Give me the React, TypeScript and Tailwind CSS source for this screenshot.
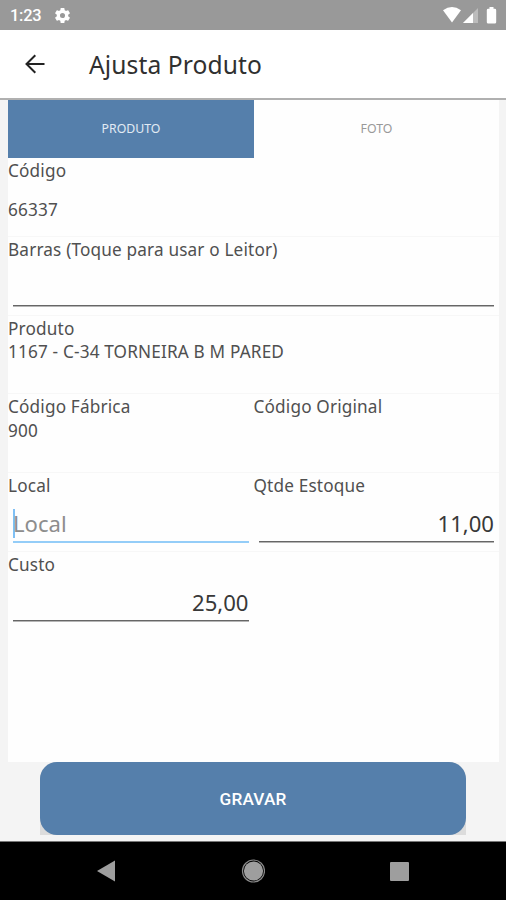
import React from 'react';
import clsx from 'clsx';

type FieldProps = {
  label: string;
  children?: React.ReactNode;
};

const Field = ({ label, children }: FieldProps) => (
  <div className="flex w-1/2 flex-1 flex-col">
    <span className="block h-6 whitespace-nowrap pt-px leading-6">{label}</span>
    {children}
  </div>
);

type InputLineProps = {
  value?: string;
  placeholder?: string;
  focused?: boolean;
};

const InputLine = ({ value, placeholder, focused }: InputLineProps) => (
  <div
    className={clsx(
      'mx-[5px] flex items-center text-[22.1px] tracking-normal text-[#383838]',
      focused
        ? 'h-[46px] border-b-2 border-[#94cdf8] pt-[9px]'
        : 'h-[45px] justify-end border-b border-[#666666] pt-2.5 shadow-[0_1px_0_#b5b5b5]'
    )}
  >
    {focused && <span className="-mr-0.5 h-[29px] w-0.5 bg-[#7fc0f5]" />}
    {placeholder ? <span className="text-[#8d8d8d]">{placeholder}</span> : value}
  </div>
);

const Row = ({ children }: { children: React.ReactNode }) => (
  <div className="flex h-[78.75px] border-b border-[#f7f7f7]">{children}</div>
);

const StatusBar = () => (
  <div className="flex h-[30px] items-center justify-between bg-[#999999] text-white">
    <div className="flex items-center pl-2.5 pt-px">
      <span className="font-['Roboto',sans-serif] text-[16.4px] font-medium leading-5 tracking-[-0.2px]">1:23</span>
      <svg className="ml-3 size-[19px]" viewBox="0 0 24 24" fill="currentColor">
        <path d="M19.14 12.94c.04-.3.06-.61.06-.94 0-.32-.02-.64-.07-.94l2.03-1.58a.49.49 0 0 0 .12-.61l-1.92-3.32a.49.49 0 0 0-.59-.22l-2.39.96c-.5-.38-1.03-.7-1.62-.94l-.36-2.54a.48.48 0 0 0-.48-.41h-3.84a.47.47 0 0 0-.47.41l-.36 2.54c-.59.24-1.13.57-1.62.94l-2.39-.96a.48.48 0 0 0-.59.22L2.74 8.87a.48.48 0 0 0 .12.61l2.03 1.58c-.05.3-.09.63-.09.94s.02.64.07.94l-2.03 1.58a.49.49 0 0 0-.12.61l1.92 3.32c.12.22.37.29.59.22l2.39-.96c.5.38 1.03.7 1.62.94l.36 2.54c.05.24.24.41.48.41h3.84c.24 0 .44-.17.47-.41l.36-2.54c.59-.24 1.13-.56 1.62-.94l2.39.96c.22.08.47 0 .59-.22l1.92-3.32a.48.48 0 0 0-.12-.61zM12 15.2a3.2 3.2 0 1 1 0-6.4 3.2 3.2 0 0 1 0 6.4" />
      </svg>
    </div>
    <svg className="mr-2 h-[18px] w-[55px]" viewBox="0 0 55 18" fill="currentColor">
      <path d="M0 4.2Q9 -2.4 18 4.2L9 16.5Z" />
      <path d="M35 2V17H20Z" opacity=".35" />
      <path d="M30 7V17H20Z" />
      <path d="M46.5 1h4v1.8h1.3q1.4 0 1.4 1.4v12q0 1.4-1.4 1.4h-6.6q-1.4 0-1.4-1.4v-12q0-1.4 1.4-1.4h1.3Z" />
    </svg>
  </div>
);

const Header = () => (
  <header className="flex h-[70px] items-center border-b-2 border-[#b0b0b0] bg-white">
    <svg className="ml-[25px] size-5" viewBox="0 0 20 20" fill="none" stroke="#222222" strokeWidth="2">
      <path d="M19.5 10H2M10.3 1.2L1.5 10L10.3 18.8" />
    </svg>
    <h1 className="ml-11 pt-[3px] text-[24.6px] tracking-[0.1px] text-[#303030]">Ajusta Produto</h1>
  </header>
);

const NavBar = () => (
  <nav className="flex h-[59px] items-center justify-between border-t border-[#777777] bg-black pl-24 pr-[97px]">
    <svg className="h-[22px] w-5" viewBox="0 0 20 22" fill="#9e9e9e">
      <path d="M1 11L19 .5V21.5Z" />
    </svg>
    <svg className="size-6" viewBox="0 0 24 24">
      <circle cx="12.5" cy="12" r="11" fill="none" stroke="#8a8a8a" strokeWidth="1.2" />
      <circle cx="12.5" cy="12" r="9.6" fill="#9e9e9e" />
    </svg>
    <span className="size-[19px] rounded-[1px] bg-[#9e9e9e]" />
  </nav>
);

const App = () => {
  return (
    <div className="flex h-[900px] w-[506px] flex-col overflow-hidden bg-[#f4f4f4] font-['Noto_Sans',sans-serif] text-[17.2px] tracking-[0.16px] text-[#505050]">
      <StatusBar />
      <Header />

      <main className="ml-2 mr-[7px] flex h-[662px] flex-col bg-[#fefefe]">
        <div className="flex h-[58px] text-[12.3px] tracking-normal">
          <div className="flex w-[246px] items-center justify-center bg-[#557fab] text-[#e2ebf4]">PRODUTO</div>
          <div className="flex flex-1 items-center justify-center text-[#999999]">FOTO</div>
        </div>

        <Row>
          <Field label="Código">
            <span className="mt-4 leading-6">66337</span>
          </Field>
        </Row>
        <Row>
          <Field label="Barras (Toque para usar o Leitor)">
            <InputLine />
          </Field>
        </Row>
        <Row>
          <Field label="Produto">
            <span className="leading-6">1167 - C-34 TORNEIRA B M PARED</span>
          </Field>
        </Row>
        <Row>
          <Field label="Código Fábrica">
            <span className="pt-px leading-6">900</span>
          </Field>
          <Field label="Código Original" />
        </Row>
        <Row>
          <Field label="Local">
            <InputLine placeholder="Local" focused />
          </Field>
          <Field label="Qtde Estoque">
            <InputLine value="11,00" />
          </Field>
        </Row>
        <div className="flex">
          <Field label="Custo">
            <InputLine value="25,00" />
          </Field>
          <div className="flex-1" />
        </div>
      </main>

      <div className="flex h-[79px] justify-center">
        <div className="h-[73px] w-[426px] rounded-t-[17px] bg-[#dcdcdc]">
          <button className="size-full rounded-[17px] bg-[#557fab] pt-0.5 font-['Roboto',sans-serif] font-medium text-white">
            GRAVAR
          </button>
        </div>
      </div>

      <NavBar />
    </div>
  );
};

export default App;
